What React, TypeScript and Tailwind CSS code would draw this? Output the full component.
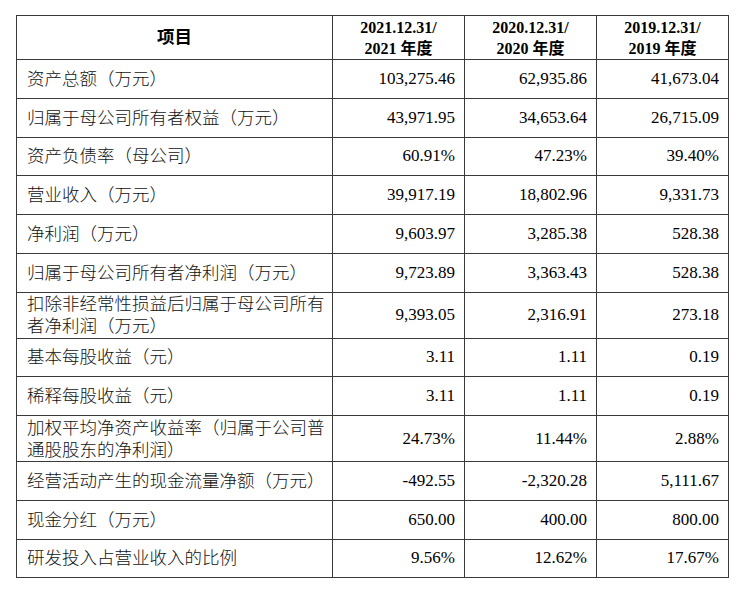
const rows: { name: string; v: [string, string, string]; tall?: boolean }[] = [
    { name: '资产总额（万元）', v: ['103,275.46', '62,935.86', '41,673.04'] },
    { name: '归属于母公司所有者权益（万元）', v: ['43,971.95', '34,653.64', '26,715.09'] },
    { name: '资产负债率（母公司）', v: ['60.91%', '47.23%', '39.40%'] },
    { name: '营业收入（万元）', v: ['39,917.19', '18,802.96', '9,331.73'] },
    { name: '净利润（万元）', v: ['9,603.97', '3,285.38', '528.38'] },
    { name: '归属于母公司所有者净利润（万元）', v: ['9,723.89', '3,363.43', '528.38'] },
    { name: '扣除非经常性损益后归属于母公司所有者净利润（万元）', v: ['9,393.05', '2,316.91', '273.18'], tall: true },
    { name: '基本每股收益（元）', v: ['3.11', '1.11', '0.19'] },
    { name: '稀释每股收益（元）', v: ['3.11', '1.11', '0.19'] },
    { name: '加权平均净资产收益率（归属于公司普通股股东的净利润）', v: ['24.73%', '11.44%', '2.88%'], tall: true },
    { name: '经营活动产生的现金流量净额（万元）', v: ['-492.55', '-2,320.28', '5,111.67'] },
    { name: '现金分红（万元）', v: ['650.00', '400.00', '800.00'] },
    { name: '研发投入占营业收入的比例', v: ['9.56%', '12.62%', '17.67%'] },
];

const years = ['2021', '2020', '2019'];

export default function App() {
    return (
        <div className="min-h-screen bg-white pl-[16px] pt-[15px] text-black font-['Liberation_Serif','Noto_Sans_CJK_SC',serif]">
            <table className="w-[712px] table-fixed border-collapse">
                <colgroup>
                    <col className="w-[316px]" />
                    <col className="w-[132px]" />
                    <col className="w-[132px]" />
                    <col className="w-[132px]" />
                </colgroup>
                <thead>
                    <tr className="h-[44px]">
                        <th className="border border-[#3a3a3a] text-center align-middle text-[17.5px] font-bold">项目</th>
                        {years.map((y) => (
                            <th key={y} className="border border-[#3a3a3a] text-center align-middle text-[16px] font-bold leading-[21px]">
                                {y}.12.31/
                                <br />
                                {y} 年度
                            </th>
                        ))}
                    </tr>
                </thead>
                <tbody>
                    {rows.map((r) => (
                        <tr key={r.name} className={r.tall ? 'h-[45.8px]' : 'h-[38.8px]'}>
                            <td className="border border-[#3a3a3a] pl-[10px] pr-[2px] align-middle text-[17.5px] leading-[22px] font-light text-[#111]">
                                {r.name}
                            </td>
                            {r.v.map((n, i) => (
                                <td key={i} className="border border-[#3a3a3a] pr-[9px] text-right align-middle text-[17px] leading-[22px]">
                                    {n}
                                </td>
                            ))}
                        </tr>
                    ))}
                </tbody>
            </table>
        </div>
    );
}
